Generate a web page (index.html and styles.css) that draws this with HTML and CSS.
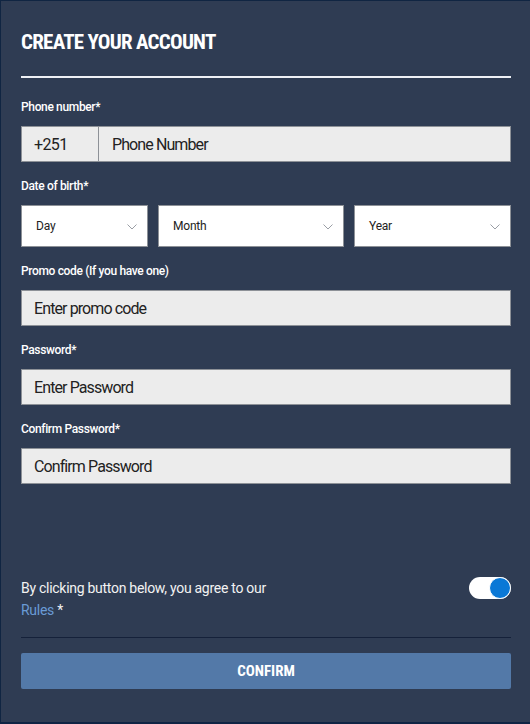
FILE: index.html
```html
<!DOCTYPE html>
<html>
<head>
<meta charset="utf-8">
<link rel="stylesheet" href="styles.css">
</head>
<body>
<div class="panel">
  <h1 class="title">CREATE YOUR ACCOUNT</h1>
  <div class="rule"></div>

  <label class="label first">Phone number*</label>
  <div class="phone">
    <div class="prefix">+251</div>
    <div class="field grow">Phone Number</div>
  </div>

  <label class="label">Date of birth*</label>
  <div class="dob">
    <div class="select day"><span>Day</span><svg class="chev" viewBox="0 0 10 6" width="10" height="6"><path d="M0.5 0.5 L5 5 L9.5 0.5" fill="none" stroke="#9a9ea5" stroke-width="1"/></svg></div>
    <div class="select month"><span>Month</span><svg class="chev" viewBox="0 0 10 6" width="10" height="6"><path d="M0.5 0.5 L5 5 L9.5 0.5" fill="none" stroke="#9a9ea5" stroke-width="1"/></svg></div>
    <div class="select year"><span>Year</span><svg class="chev" viewBox="0 0 10 6" width="10" height="6"><path d="M0.5 0.5 L5 5 L9.5 0.5" fill="none" stroke="#9a9ea5" stroke-width="1"/></svg></div>
  </div>

  <label class="label">Promo code (If you have one)</label>
  <div class="field">Enter promo code</div>

  <label class="label">Password*</label>
  <div class="field">Enter Password</div>

  <label class="label">Confirm Password*</label>
  <div class="field">Confirm Password</div>

  <div class="agree">
    <div class="agree-text">
      <div>By clicking button below, you agree to our</div>
      <div class="rules-line"><span class="rules">Rules</span> *</div>
    </div>
    <div class="toggle"><div class="knob"></div></div>
  </div>
  <div class="rule dark"></div>
  <button class="confirm">CONFIRM</button>
</div>
</body>
</html>
```
FILE: styles.css
```css
html, body {
  margin: 0;
  padding: 0;
  background: #2f3c53;
}
body {
  width: 530px;
  height: 724px;
  overflow: hidden;
  font-family: Roboto, "Liberation Sans", sans-serif;
  color: #ffffff;
}
.panel {
  box-sizing: border-box;
  height: 724px;
  border-top: 1px solid #102542;
  border-left: 1px solid #102542;
  border-bottom: 2px solid #0f2444;
  padding: 0 19px 0 20px;
  display: flex;
  flex-direction: column;
}
.title {
  margin: 29px 0 0;
  font-size: 21px;
  line-height: 24px;
  font-weight: 700;
  font-stretch: 80%;
  letter-spacing: -0.75px;
}
.rule {
  height: 2px;
  background: #eef0f5;
  margin-top: 22px;
}
.rule.dark {
  height: 1px;
  background: #15213a;
  margin-top: 16px;
}
.label {
  display: block;
  font-size: 12px;
  line-height: 16px;
  font-weight: 500;
  letter-spacing: -0.35px;
  margin-top: 16px;
  margin-bottom: 11px;
}
.label.first {
  margin-top: 21px;
}
.phone {
  display: flex;
  height: 36px;
}
.prefix {
  box-sizing: border-box;
  width: 78px;
  background: #ececec;
  border: 1px solid #8d9197;
  color: #222;
  font-size: 16px;
  display: flex;
  align-items: center;
  padding-left: 12px;
  letter-spacing: -0.6px;
}
.field {
  box-sizing: border-box;
  height: 36px;
  background: #ececec;
  border: 1px solid #8d9197;
  color: #222;
  font-size: 16px;
  display: flex;
  align-items: center;
  padding-left: 12px;
  letter-spacing: -0.9px;
}
.phone .field {
  border-left: none;
  flex: 1;
  padding-left: 13px;
}
.dob {
  display: flex;
  gap: 10px;
  height: 42px;
}
.select {
  box-sizing: border-box;
  background: #ffffff;
  border: 1px solid #8d9197;
  color: #222;
  font-size: 12px;
  display: flex;
  align-items: center;
  justify-content: space-between;
  padding: 0 10px 0 14px;
  letter-spacing: -0.2px;
}
.chev { margin-top: 1px; }
.day { width: 127px; }
.month { width: 186px; }
.year { flex: 1; }
.agree {
  margin-top: 93px;
  display: flex;
  justify-content: space-between;
  align-items: flex-start;
}
.agree-text {
  font-size: 14px;
  line-height: 22px;
  letter-spacing: -0.28px;
  color: #f2f2f2;
}
.rules { color: #6a9bd6; }
.toggle {
  width: 42px;
  height: 22px;
  border-radius: 11px;
  background: #ffffff;
  position: relative;
}
.knob {
  position: absolute;
  right: 0;
  top: 0;
  width: 22px;
  height: 22px;
  border-radius: 50%;
  background: #0a78d6;
  box-sizing: border-box;
  border: 1px solid #ffffff;
}
.confirm {
  margin-top: 15px;
  height: 36px;
  border: none;
  border-radius: 2px;
  background: #5379a8;
  color: #ffffff;
  font-family: Roboto, "Liberation Sans", sans-serif;
  font-size: 15px;
  font-weight: 700;
  font-stretch: 85%;
  letter-spacing: 0;
  padding: 0;
}
```
